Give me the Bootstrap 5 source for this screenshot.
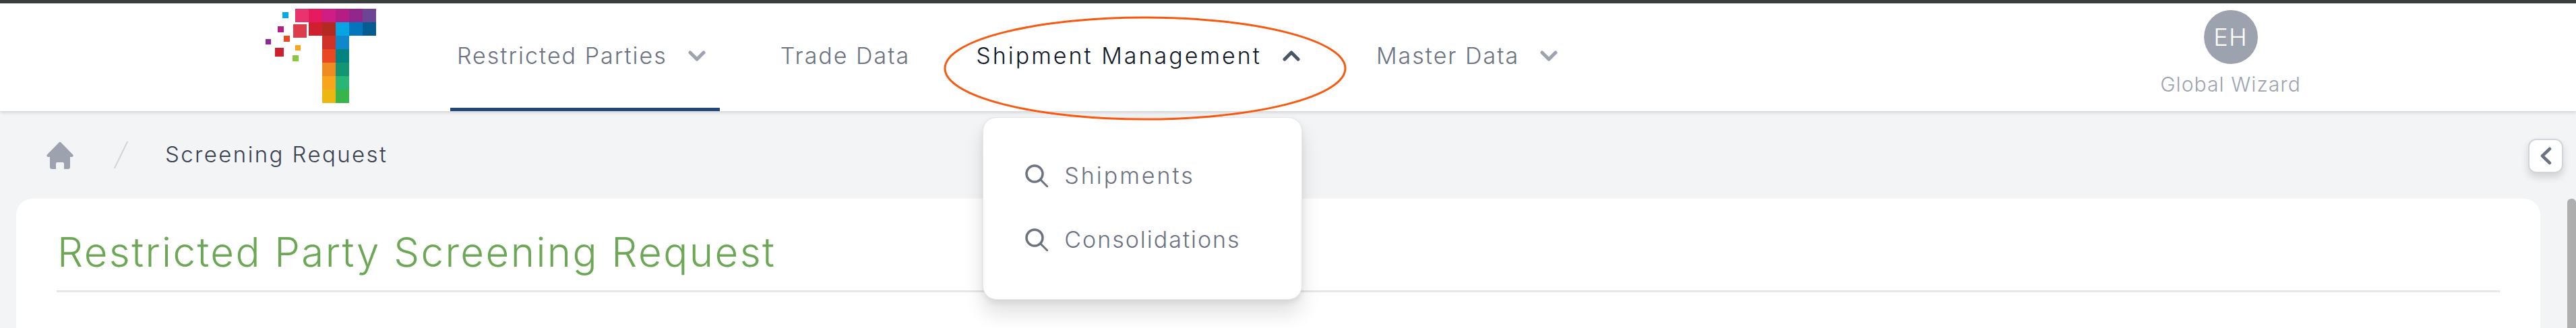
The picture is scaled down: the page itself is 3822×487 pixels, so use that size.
<!DOCTYPE html>
<html lang="en">
<head>
    <meta charset="UTF-8">
    <meta name="viewport" content="width=device-width, initial-scale=1.0">
    <title>Screening Request</title>

    <!-- Bootstrap CSS -->
    <link rel="stylesheet" href="https://cdn.jsdelivr.net/npm/bootstrap@5.3.0/dist/css/bootstrap.min.css">

    <style>
        html {
            overflow: hidden;
        }

        body {
            background-color: #f3f4f6;
            font-family: Inter, "Liberation Sans", sans-serif;
            font-weight: 300;
            height: 487px;
            overflow: hidden;
            position: relative;
        }

        .app-header {
            height: 165px;
            border-top: 5px solid #3c3f3f;
            background: #fff;
            box-shadow: 0 2px 5px rgba(0, 0, 0, .15);
            position: relative;
            padding-left: 394px;
            padding-right: 409px;
        }

        .brand-logo {
            width: 164px;
            height: 140px;
            margin-top: 8px;
            margin-right: 110px;
        }

        .main-nav {
            gap: 80px;
            font-size: 34px;
            letter-spacing: 2px;
        }

        .main-item {
            position: relative;
            height: 160px;
        }

        .main-link {
            display: flex;
            align-items: flex-start;
            height: 160px;
            padding: 52px 21px 0 10px;
            color: #6b7280;
            text-decoration: none;
            white-space: nowrap;
        }

        .main-link.current {
            border-bottom: 5px solid #24477a;
        }

        .main-link.plain {
            padding-right: 8px;
        }

        .main-link.open {
            color: #111827;
            letter-spacing: 3px;
            padding-right: 23px;
        }

        .nav-chevron {
            width: 26px;
            height: 16px;
            margin-left: 31px;
            margin-top: 18px;
        }

        .menu-panel.dropdown-menu {
            left: 20px;
            top: 169px;
            width: 474px;
            height: 271px;
            padding: 38px 0 0 62px;
            border: 1px solid #e5e7eb;
            border-radius: 20px;
            box-shadow: 0 20px 30px rgba(0, 0, 0, .12), 0 4px 8px rgba(0, 0, 0, .08);
            font-size: 34px;
        }

        .menu-row {
            display: flex;
            align-items: center;
            gap: 24px;
            height: 95px;
            color: #6b7280;
        }

        .menu-row svg {
            width: 34px;
            height: 34px;
        }

        .wide-label {
            letter-spacing: 3px;
        }

        .tight-label {
            letter-spacing: 2px;
        }

        .user-box {
            width: 207px;
            color: #9ca3af;
            font-size: 30px;
            letter-spacing: 1.1px;
            white-space: nowrap;
        }

        .user-avatar {
            flex: 0 0 80px;
            width: 80px;
            margin-top: 10px;
            margin-bottom: 8px;
            border-radius: 50%;
            background: #9ca3af;
            color: #fff;
            font-size: 36px;
        }

        .crumbs {
            height: 130px;
            padding-left: 69px;
            font-size: 33px;
            letter-spacing: 2.4px;
            color: #374151;
        }

        .crumb-home {
            width: 40px;
            height: 41px;
        }

        .crumb-slash {
            width: 21px;
            height: 40px;
            margin-left: 60px;
            margin-right: 55px;
        }

        .page-card.card {
            margin-left: 24px;
            width: 3745px;
            height: 192px;
            padding: 34px 60px 0 60px;
            border: 0;
            border-radius: 24px 24px 0 0;
        }

        .page-title {
            color: #6ba755;
            font-size: 60px;
            font-weight: 300;
            letter-spacing: 2.4px;
            line-height: 90px;
            margin: 0;
            padding-left: 1px;
            padding-bottom: 12px;
            border-bottom: 3px solid #e5e7eb;
        }

        .side-toggle {
            position: absolute;
            left: 3751px;
            top: 206px;
            width: 52px;
            height: 51px;
            background: #fff;
            border: 2px solid #d1d5db;
            border-radius: 12px;
            box-shadow: 0 6px 12px rgba(0, 0, 0, .14);
        }

        .side-toggle svg {
            width: 17px;
            height: 27px;
        }

        .fake-scrollbar {
            position: absolute;
            left: 3809px;
            top: 295px;
            width: 13px;
            height: 192px;
            background: #aeaeae;
            border-radius: 6px 6px 0 0;
        }

        .note-ellipse {
            position: absolute;
            left: 1400px;
            top: 24px;
            width: 598px;
            height: 155px;
            pointer-events: none;
            z-index: 2000;
        }
    </style>
</head>
<body>
    <header class="app-header d-flex">
        <svg class="brand-logo flex-shrink-0" viewBox="394 13 164 140">
            <rect x="438" y="13" width="20" height="20" fill="#e8336f"/>
            <rect x="458" y="13" width="20" height="20" fill="#e61b5f"/>
            <rect x="478" y="13" width="20" height="20" fill="#d01c85"/>
            <rect x="498" y="13" width="20" height="20" fill="#b31d84"/>
            <rect x="518" y="13" width="20" height="20" fill="#93268c"/>
            <rect x="538" y="13" width="20" height="20" fill="#6e4496"/>
            <rect x="458" y="33" width="20" height="20" fill="#cf202f"/>
            <rect x="478" y="33" width="20" height="20" fill="#b22a22"/>
            <rect x="498" y="33" width="20" height="20" fill="#05a5e2"/>
            <rect x="518" y="33" width="20" height="20" fill="#0476bd"/>
            <rect x="538" y="33" width="20" height="20" fill="#055c92"/>
            <rect x="478" y="53" width="20" height="20" fill="#cf3327"/>
            <rect x="498" y="53" width="20" height="20" fill="#0f88cb"/>
            <rect x="478" y="73" width="20" height="20" fill="#ea4725"/>
            <rect x="498" y="73" width="20" height="20" fill="#028380"/>
            <rect x="478" y="93" width="20" height="20" fill="#f08a22"/>
            <rect x="498" y="93" width="20" height="20" fill="#129570"/>
            <rect x="478" y="113" width="20" height="20" fill="#f8a51c"/>
            <rect x="498" y="113" width="20" height="20" fill="#29b574"/>
            <rect x="478" y="133" width="20" height="20" fill="#ecb713"/>
            <rect x="498" y="133" width="20" height="20" fill="#38b54a"/>
            <rect x="419" y="18" width="9" height="9" fill="#08a8e2"/>
            <rect x="412" y="39" width="9" height="9" fill="#b41f85"/>
            <rect x="435" y="36" width="20" height="20" fill="#dc3c4c"/>
            <rect x="421" y="53" width="9" height="9" fill="#ec4a26"/>
            <rect x="394" y="58" width="8" height="8" fill="#93268f"/>
            <rect x="438" y="67" width="8" height="8" fill="#f9a51b"/>
            <rect x="408" y="71" width="13" height="13" fill="#cf1f2f"/>
            <rect x="434" y="82" width="9" height="9" fill="#8cc63f"/>
        </svg>

        <nav class="main-nav d-flex flex-grow-1">
            <div class="main-item">
                <a class="main-link current" href="#">Restricted Parties
                    <svg class="nav-chevron" viewBox="0 0 26 16"><path d="M3 3l10 10L23 3" fill="none" stroke="#9ca3af" stroke-width="5" stroke-linecap="round" stroke-linejoin="round"/></svg>
                </a>
            </div>
            <div class="main-item">
                <a class="main-link plain" href="#">Trade Data</a>
            </div>
            <div class="main-item">
                <a class="main-link open" href="#">Shipment Management
                    <svg class="nav-chevron" viewBox="0 0 26 16"><path d="M3 13L13 3l10 10" fill="none" stroke="#4b5563" stroke-width="5" stroke-linecap="round" stroke-linejoin="round"/></svg>
                </a>
                <div class="dropdown-menu show menu-panel">
                    <div class="menu-row">
                        <svg viewBox="0 0 34 34"><circle cx="14" cy="14" r="12" fill="none" stroke="#6b7280" stroke-width="3.5"/><path d="M22.5 22.5L33 33" stroke="#6b7280" stroke-width="3" stroke-linecap="round"/></svg>
                        <span class="wide-label">Shipments</span>
                    </div>
                    <div class="menu-row">
                        <svg viewBox="0 0 34 34"><circle cx="14" cy="14" r="12" fill="none" stroke="#6b7280" stroke-width="3.5"/><path d="M22.5 22.5L33 33" stroke="#6b7280" stroke-width="3" stroke-linecap="round"/></svg>
                        <span class="tight-label">Consolidations</span>
                    </div>
                </div>
            </div>
            <div class="main-item">
                <a class="main-link" href="#">Master Data
                    <svg class="nav-chevron" viewBox="0 0 26 16"><path d="M3 3l10 10L23 3" fill="none" stroke="#9ca3af" stroke-width="5" stroke-linecap="round" stroke-linejoin="round"/></svg>
                </a>
            </div>
        </nav>

        <div class="user-box d-flex flex-column align-items-center flex-shrink-0">
            <div class="user-avatar d-flex align-items-center justify-content-center">EH</div>
            <div>Global Wizard</div>
        </div>
    </header>

    <div class="crumbs d-flex align-items-center">
        <svg class="crumb-home" viewBox="0 0 40 41"><path d="M18.500 1.500a2 2 0 0 1 3 0L39 19.500a2 2 0 0 1-1.500 3.500H35V38a3 3 0 0 1-3 3H26V33a2 2 0 0 0-2-2h-8a2 2 0 0 0-2 2v8H8a3 3 0 0 1-3-3V23H2.500A2 2 0 0 1 1 19.500z" fill="#9ca3af"/></svg>
        <svg class="crumb-slash" viewBox="0 0 21 40"><path d="M20 0.500L1 39.500" stroke="#d1d5db" stroke-width="2" stroke-linecap="round"/></svg>
        <span>Screening Request</span>
    </div>

    <main class="card page-card">
        <h1 class="page-title">Restricted Party Screening Request</h1>
    </main>

    <div class="side-toggle d-flex align-items-center justify-content-center">
        <svg viewBox="0 0 17 27"><path d="M14 3L3 13.500l11 10.500" fill="none" stroke="#6b7280" stroke-width="4.500" stroke-linecap="round" stroke-linejoin="round"/></svg>
    </div>
    <div class="fake-scrollbar"></div>

    <svg class="note-ellipse" viewBox="0 0 598 155"><ellipse cx="299" cy="77.500" rx="297" ry="75.500" fill="none" stroke="#f9590f" stroke-width="3"/></svg>

    <!-- Bootstrap JS -->
    <script src="https://cdn.jsdelivr.net/npm/bootstrap@5.3.0/dist/js/bootstrap.bundle.min.js"></script>
</body>
</html>
